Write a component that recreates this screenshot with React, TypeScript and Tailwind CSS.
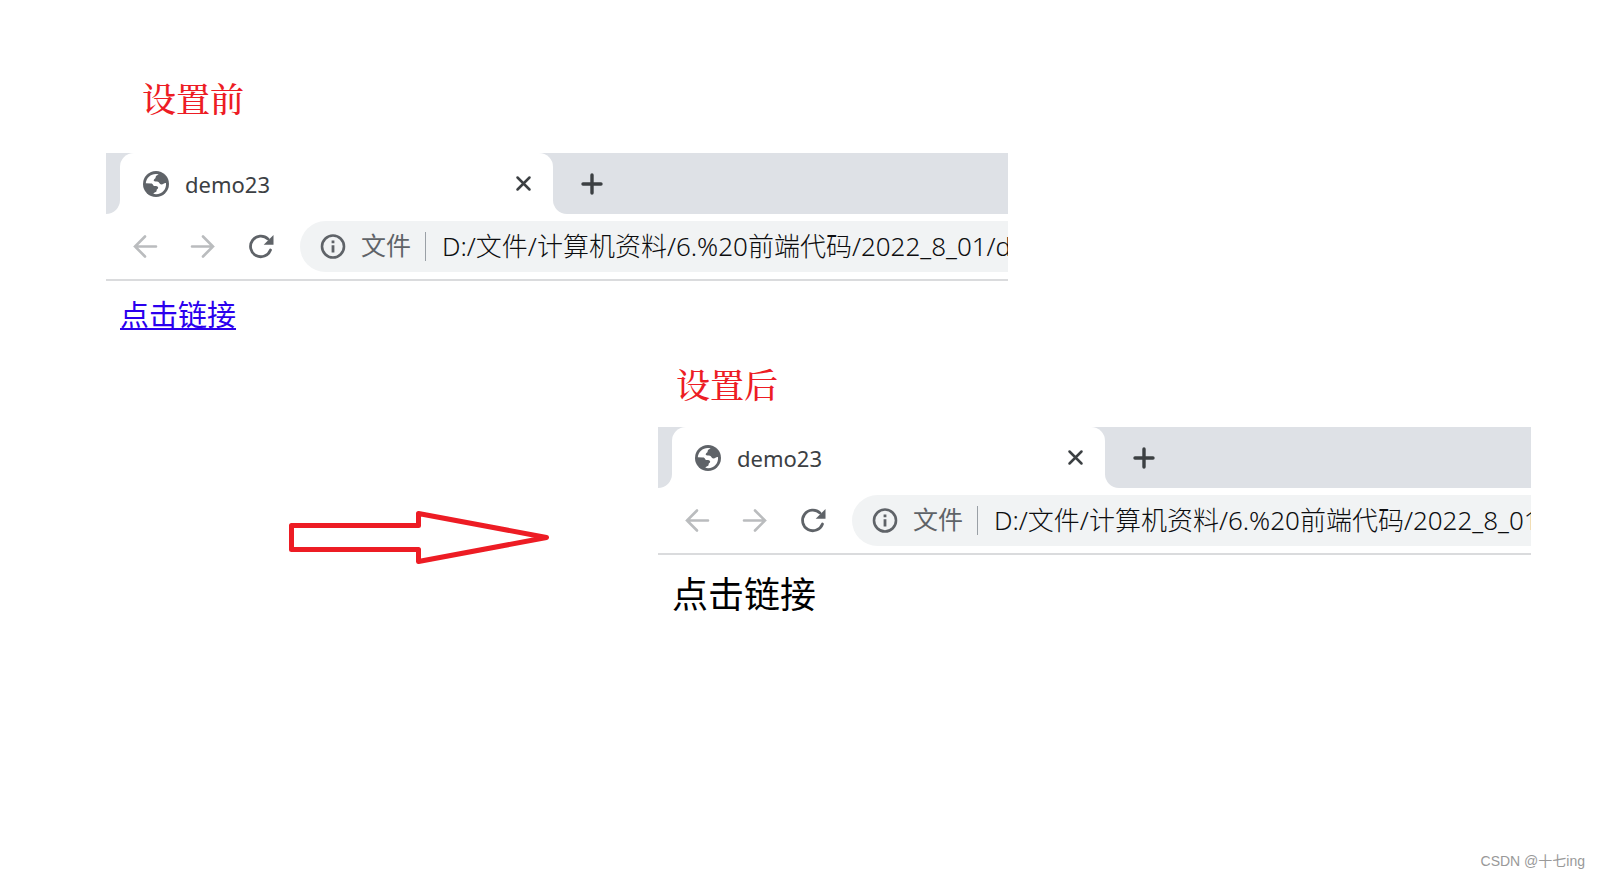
import React from "react";

interface BrowserProps {
    title: string;
    url: string;
    id: string;
    children: React.ReactNode;
}

const fileUrl = "D:/文件/计算机资料/6.%20前端代码/2022_8_01/demo23.html"

const GlobeIcon = () => (
    <svg width="26" height="26" viewBox="0 0 26 26" aria-hidden="true">
        <circle cx="13" cy="13" r="13" fill="#5f6368" />
        <path
            d="M2.800 12.200C3.200 7 7.500 3 13 2.900l2.600.3C14.400 4.300 12.800 4.200 12.700 6c0 2-2 1.900-2 3.200 0 1.200 1.200 1.300 3.300 1.300 2.600 0 2.200 3 4.500 3 1.800 0 2.300-1.700 4.500-1.500C23.600 18 19.500 23.200 13 23.200l-2.600-.4c.4-1.500 3.200-1.300 3.200-3.300 0-1.500 1.600-1.500 1.600-2.700 0-1.600-1.700-1.900-3.800-1.900-1.500 0-1.200-2.500-3.200-2.500z"
            fill="#fff"
        />
    </svg>
)

const BackIcon = () => (
    <svg width="26" height="26" viewBox="0 0 26 26" fill="none" stroke="#babcbe" strokeWidth="2.600" strokeLinecap="round" aria-hidden="true">
        <path d="M24 12.500H3M13 2.500l-10 10 10 10" />
    </svg>
)

const ForwardIcon = () => (
    <svg width="26" height="26" viewBox="0 0 26 26" fill="none" stroke="#babcbe" strokeWidth="2.600" strokeLinecap="round" aria-hidden="true">
        <path d="M2 12.500h21M13 2.500l10 10-10 10" />
    </svg>
)

const ReloadIcon = () => (
    <svg width="26" height="26" viewBox="0 0 26 26" fill="none" aria-hidden="true">
        <path d="M22.500 16A10.300 10.300 0 1 1 20 5" stroke="#5f6368" strokeWidth="2.800" strokeLinecap="round" />
        <path d="M25.500 1v9.800h-9.800z" fill="#5f6368" />
    </svg>
)

const InfoIcon = () => (
    <svg width="26" height="26" viewBox="0 0 26 26" fill="none" aria-hidden="true">
        <circle cx="13" cy="12.500" r="11" stroke="#5f6368" strokeWidth="2.600" />
        <path d="M11.600 6.500h2.800v2.700h-2.800zM11.600 11.200h2.800v7.300h-2.800z" fill="#5f6368" />
    </svg>
)

const Browser = ({ title, url, id, children } : BrowserProps) => {
    return (
        <div className="overflow-hidden font-['Noto_Sans','Noto_Sans_CJK_SC',sans-serif]">
            {/* tab strip */}
            <div className="flex h-[61px] bg-white">
                <div className="w-[14px] shrink-0 rounded-br-[14px] bg-[#dee1e6]"></div>
                <div className="w-[433px] shrink-0 bg-[#dee1e6]">
                    <div className="flex h-full items-center rounded-t-[14px] bg-white pr-5 pl-[23px]">
                        <GlobeIcon />
                        <span className="ml-4 grow pt-px text-[22px] text-[#3c4043]">{title}</span>
                        <button type="button" aria-label="Close tab">
                            <svg width="20" height="20" viewBox="0 0 20 20" stroke="#3c4043" strokeWidth="2.500" strokeLinecap="round">
                                <path d="M4.500 3.500l12 12M16.500 3.500l-12 12" />
                            </svg>
                        </button>
                    </div>
                </div>
                <div className="flex grow items-center rounded-bl-[14px] bg-[#dee1e6] pl-7">
                    <button type="button" aria-label="New tab">
                        <svg width="22" height="22" viewBox="0 0 22 22" stroke="#3c4043" strokeWidth="3.400" strokeLinecap="round">
                            <path d="M11 2v18M2 11h18" />
                        </svg>
                    </button>
                </div>
            </div>
            {/* toolbar */}
            <div className="flex h-[67px] items-center border-b-2 border-[#dadbdd] pl-[26px]">
                <div className="flex shrink-0 gap-8">
                    <button type="button" aria-label="Back"><BackIcon /></button>
                    <button type="button" aria-label="Forward"><ForwardIcon /></button>
                    <button type="button" aria-label="Reload"><ReloadIcon /></button>
                </div>
                <div className="ml-[26px] flex h-[51px] min-w-0 grow items-center rounded-l-full bg-[#f1f3f4] pl-5">
                    <InfoIcon />
                    <label htmlFor={id} className="ml-[15px] shrink-0 pb-0.5 text-[25px] text-[#5f6368]">文件</label>
                    <div className="mr-4 ml-[14px] h-[29px] w-px shrink-0 bg-[#9aa0a6]"></div>
                    <input
                        id={id}
                        type="text"
                        defaultValue={url}
                        className="h-[51px] min-w-0 grow bg-transparent pb-1 text-[26px] font-light text-[#0c0d0f] outline-none"
                    />
                </div>
            </div>
            {children}
        </div>
    )
}

const App = () => {
    return (
        <main className="flex min-h-screen flex-col bg-white font-['Noto_Sans','Noto_Sans_CJK_SC',sans-serif]">
            <section className="mr-[37%] ml-[106px] pt-[74px]">
                <h2 className="pl-9 font-['Noto_Serif_CJK_SC','Noto_Sans_CJK_SC',serif] text-[34px] leading-[48px] font-medium text-[#ed1c24]">设置前</h2>
                <div className="pt-[31px]">
                    <Browser title="demo23" url={fileUrl} id="url-before">
                        <div className="pt-3 pl-[14px] text-[29px] leading-[44px]">
                            <a href="#" className="text-[#2b00ee] underline decoration-2 underline-offset-2">点击链接</a>
                        </div>
                    </Browser>
                </div>
            </section>
            <section className="mt-[23px] mr-[69px] ml-[289px] flex">
                <svg className="mt-[151px] shrink-0" width="261" height="54" viewBox="0 0 261 54" fill="none" aria-hidden="true">
                    <path d="M2.500 14.500H129.500V2.500L257.500 26.500 129.500 50.500V38.500H2.500Z" stroke="#ed1c24" strokeWidth="5" strokeLinejoin="round" />
                </svg>
                <div className="ml-[108px] min-w-0 grow">
                    <h2 className="pl-[18px] font-['Noto_Serif_CJK_SC','Noto_Sans_CJK_SC',serif] text-[34px] leading-[48px] font-medium text-[#ed1c24]">设置后</h2>
                    <div className="pt-[19px]">
                        <Browser title="demo23" url={fileUrl} id="url-after">
                            <div className="pt-3 pl-[14px] text-[36px] leading-[56px]">
                                <a href="#" className="text-black">点击链接</a>
                            </div>
                        </Browser>
                    </div>
                </div>
            </section>
            <footer className="mt-auto pr-[15px] pb-[7px] text-right font-['Liberation_Sans','Noto_Sans_CJK_SC',sans-serif] text-[14px] leading-[20px] text-[#999999]">
                CSDN @十七ing
            </footer>
        </main>
    )
}

export default App
